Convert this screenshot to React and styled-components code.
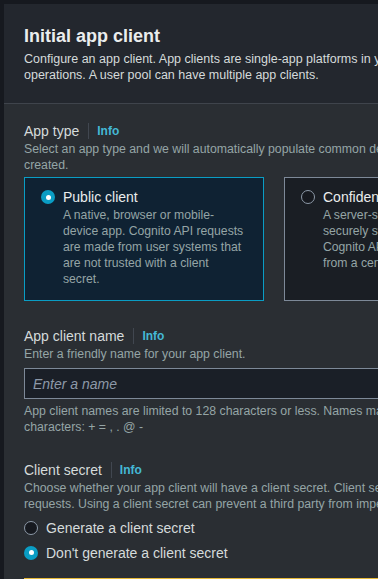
import styled, { createGlobalStyle } from "styled-components";

const Global = createGlobalStyle`
  html, body {
    margin: 0;
    background: #16191f;
    overflow: hidden;
  }
  body {
    font-family: "Liberation Sans", Arial, sans-serif;
    padding: 4px 0 0 4px;
  }
`;

const Container = styled.section`
  width: 900px;
  background: #2a2e33;
`;

const Header = styled.header`
  background: #23272e;
  padding: 21px 20px 20px;
  border-bottom: 1px solid #3f444c;
`;

const Title = styled.h2`
  margin: 0 0 4px;
  font-size: 18px;
  line-height: 22px;
  font-weight: 700;
  color: #eaeded;
`;

const Desc = styled.p`
  margin: 0;
  font-size: ${(p) => (p.large ? "12.5px" : "12.3px")};
  line-height: 16px;
  white-space: nowrap;
  color: ${(p) => (p.large ? "#d5dbdb" : "#95a5a6")};
`;

const Body = styled.div`
  padding: 17px 20px 0;
  display: flex;
  flex-direction: column;
  gap: 25px;
`;

const Field = styled.div`
  display: flex;
  flex-direction: column;
`;

const LabelRow = styled.div`
  display: flex;
  align-items: center;
  height: 20px;
`;

const Label = styled.span`
  font-size: 14px;
  color: #d5dbdb;
`;

const Divider = styled.span`
  width: 1px;
  height: 16px;
  background: #414750;
  margin: 0 8px 0 9px;
`;

const Info = styled.span`
  font-size: 12px;
  font-weight: 700;
  color: #44b9d6;
`;

const Cards = styled.div`
  display: grid;
  grid-template-columns: 240px 240px;
  gap: 20px;
  margin-top: 4px;
`;

const Card = styled.div`
  box-sizing: border-box;
  height: 124px;
  padding: 9px 16px 12px;
  border: 1px solid ${(p) => (p.selected ? "#0a9dc4" : "#7d8998")};
  background: ${(p) => (p.selected ? "#0f2233" : "#1a1e24")};
  display: grid;
  grid-template-columns: 14px 1fr;
  column-gap: 8px;
`;

const Radio = styled.span`
  box-sizing: border-box;
  flex: none;
  width: 14px;
  height: 14px;
  margin-top: ${(p) => (p.inline ? "0" : "3px")};
  border-radius: 50%;
  display: flex;
  align-items: center;
  justify-content: center;
  background: ${(p) => (p.checked ? "#0a9dc4" : "#16191f")};
  border: ${(p) => (p.checked ? "none" : "1.5px solid #8d99a8")};
  &::after {
    content: "";
    display: ${(p) => (p.checked ? "block" : "none")};
    width: 5px;
    height: 5px;
    border-radius: 50%;
    background: #fff;
  }
`;

const CardTitle = styled.div`
  font-size: 14px;
  line-height: 20px;
  color: #eaeded;
`;

const CardText = styled.div`
  font-size: 12.2px;
  line-height: 16px;
  color: #95a5a6;
  white-space: nowrap;
`;

const Input = styled.div`
  box-sizing: border-box;
  margin: 6px 0 4px;
  height: 31px;
  border: 1px solid #7d8998;
  background: #1a1f27;
  padding: 0 8px;
  display: flex;
  align-items: center;
  font-size: 14px;
  font-style: italic;
  color: #8d99a8;
`;

const Options = styled.div`
  display: flex;
  flex-direction: column;
  margin-top: 3px;
`;

const Option = styled.label`
  display: flex;
  align-items: center;
  gap: 8px;
  height: 25px;
  font-size: 14px;
  color: #d5dbdb;
`;

const Warning = styled.div`
  margin-top: 13px;
  height: 60px;
  border: 1px solid #e6b93a;
  background: #2a2e33;
`;

const lines = (arr) => arr.map((l, i) => <div key={i}>{l}</div>);

export default function App() {
  return (
    <>
      <Global />
      <Container>
        <Header>
          <Title>Initial app client</Title>
          <Desc large>
            Configure an app client. App clients are single-app platforms in your user pool that have permissions to call unauthenticated API
            <br />
            operations. A user pool can have multiple app clients.
          </Desc>
        </Header>
        <Body>
          <Field>
            <LabelRow>
              <Label>App type</Label>
              <Divider />
              <Info>Info</Info>
            </LabelRow>
            <Desc>
              Select an app type and we will automatically populate common default settings for the app client type that you have
              <br />
              created.
            </Desc>
            <Cards>
              <Card selected>
                <Radio checked />
                <div>
                  <CardTitle>Public client</CardTitle>
                  <CardText>
                    {lines([
                      "A native, browser or mobile-",
                      "device app. Cognito API requests",
                      "are made from user systems that",
                      "are not trusted with a client",
                      "secret.",
                    ])}
                  </CardText>
                </div>
              </Card>
              <Card>
                <Radio />
                <div>
                  <CardTitle>Confidential client</CardTitle>
                  <CardText>
                    {lines([
                      "A server-side application that can",
                      "securely store a client secret.",
                      "Cognito API requests are made",
                      "from a central server.",
                    ])}
                  </CardText>
                </div>
              </Card>
            </Cards>
          </Field>
          <Field>
            <LabelRow>
              <Label>App client name</Label>
              <Divider />
              <Info>Info</Info>
            </LabelRow>
            <Desc>Enter a friendly name for your app client.</Desc>
            <Input>Enter a name</Input>
            <Desc>
              App client names are limited to 128 characters or less. Names may only contain alphanumeric characters, spaces, and the following special
              <br />
              characters: + = , . @ -
            </Desc>
          </Field>
          <Field>
            <LabelRow>
              <Label>Client secret</Label>
              <Divider />
              <Info>Info</Info>
            </LabelRow>
            <Desc>
              Choose whether your app client will have a client secret. Client secrets are used by the server-side component of an app to authorize API
              <br />
              requests. Using a client secret can prevent a third party from impersonating your client.
            </Desc>
            <Options>
              <Option>
                <Radio inline />
                Generate a client secret
              </Option>
              <Option>
                <Radio inline checked />
                Don't generate a client secret
              </Option>
            </Options>
            <Warning />
          </Field>
        </Body>
      </Container>
    </>
  );
}
